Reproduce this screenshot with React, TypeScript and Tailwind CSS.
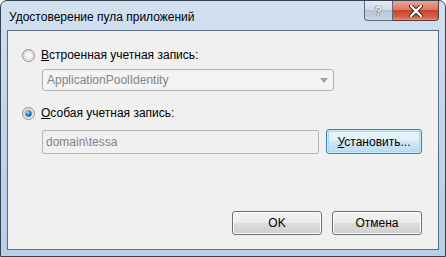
import React from 'react';

const font = { fontFamily: '"Liberation Sans", "Noto Sans", sans-serif' };

function Radio ({ checked }: { checked?: boolean }) {
	return (
		<svg width="13" height="13" viewBox="0 0 13 13" className="shrink-0">
			<defs>
				<linearGradient id="rb" x1="0" y1="0" x2="1" y2="1">
					<stop offset="0" stopColor="#d3d3d3" />
					<stop offset="1" stopColor="#fdfdfd" />
				</linearGradient>
				<radialGradient id="rdot" cx="0.4" cy="0.35" r="0.7">
					<stop offset="0" stopColor="#bfe4fb" />
					<stop offset="0.45" stopColor="#3d8ed6" />
					<stop offset="1" stopColor="#0d3f7a" />
				</radialGradient>
			</defs>
			<circle cx="6.5" cy="6.5" r="6" fill="url(#rb)" stroke="#8e8f8f" />
			<circle cx="6.5" cy="6.5" r="4.3" fill="#f4f4f4" stroke="#cfcfcf" strokeWidth="0.8" />
			{checked && <circle cx="6.5" cy="6.5" r="3.2" fill="url(#rdot)" />}
		</svg>
	);
}

function Button ({ children, focused, className }: { children: React.ReactNode; focused?: boolean; className?: string }) {
	return (
		<div className={`flex items-center justify-center rounded-[3px] border text-[12px] text-black ${focused
			? 'border-[#3c7fb1] bg-[linear-gradient(#eaf6fd_0%,#e3f1fb_45%,#cfe7f7_50%,#b9dcf3_100%)] shadow-[inset_0_0_0_1px_#c5ecfc,inset_0_0_0_2px_#a3dcf6]'
			: 'border-[#707070] bg-[linear-gradient(#f2f2f2_0%,#ebebeb_49%,#dddddd_50%,#cfcfcf_100%)] shadow-[inset_0_0_0_1px_#fcfcfc]'} ${className ?? ''}`}>
			{children}
		</div>
	);
}

export default function App () {
	return (
		<div style={font}
			className="flex h-[257px] w-[446px] flex-col rounded-t-[7px] border border-[#36424f] bg-[linear-gradient(180deg,#d3e1f0_0%,#c2d6eb_40%,#b7cfe9_100%)]">
			{/* Title bar */}
			<div className="flex h-[29px] shrink-0 items-start">
				<div className="pl-[8px] pt-[7px] text-[12px] text-black">Удостоверение пула приложений</div>
				<div className="ml-auto mr-[6px] flex">
					<div className="flex h-[20px] w-[29px] items-center justify-center rounded-bl-[4px] border border-t-0 border-[#5a6a7d] bg-[linear-gradient(#e3eaf3_0%,#d1dce9_45%,#b4c4d8_50%,#c9d6e5_100%)] text-[13px] font-bold text-white [text-shadow:0_0_1px_#1f2b38,0_0_1px_#1f2b38]">
						?
					</div>
					<div className="flex h-[20px] w-[46px] items-center justify-center rounded-br-[4px] border border-l-0 border-t-0 border-[#5a3a34] bg-[linear-gradient(#e8a493_0%,#d97a66_45%,#c7432a_50%,#d5644a_85%,#e88f71_100%)]">
						<svg width="14" height="12" viewBox="0 0 14 12">
							<path d="M2 1 L12 11 M12 1 L2 11" stroke="#3a1a14" strokeWidth="4.2" strokeLinecap="round" />
							<path d="M2 1 L12 11 M12 1 L2 11" stroke="#ffffff" strokeWidth="2.4" strokeLinecap="round" />
						</svg>
					</div>
				</div>
			</div>

			{/* Client area */}
			<div className="mx-[6px] mb-[6px] flex flex-1 flex-col border border-[#5d6c7e] bg-[#f0f0f0] pl-[14px] pr-[16px] text-[12px] text-black">
				<div className="mt-[16px] flex h-[16px] items-center gap-[6px]">
					<Radio />
					<span><span className="underline">В</span>строенная учетная запись:</span>
				</div>
				<div className="ml-[20px] mt-[6px] flex h-[22px] w-[292px] items-center rounded-[3px] border border-[#b3b3b3] bg-[#f4f4f4] pl-[4px] pr-[5px] text-[#838383]">
					<span>ApplicationPoolIdentity</span>
					<svg width="8" height="5"
						viewBox="0 0 8 5"
						className="ml-auto">
						<path d="M0 0 H8 L4 5 Z" fill="#a0a0a0" />
					</svg>
				</div>

				<div className="mt-[14px] flex h-[16px] items-center gap-[6px]">
					<Radio checked />
					<span><span className="underline">О</span>собая учетная запись:</span>
				</div>
				<div className="ml-[20px] mt-[8px] flex items-center gap-[7px]">
					<div className="flex h-[24px] w-[277px] items-center rounded-[2px] border border-[#b7b7b7] bg-[#f0f0f0] pl-[3px] text-[#838383]">
						domain\tessa
					</div>
					<Button focused
						className="h-[25px] w-[96px]">
						<span><span className="underline">У</span>становить...</span>
					</Button>
				</div>

				<div className="mb-[14px] mt-auto flex justify-end gap-[10px]">
					<Button className="h-[24px] w-[90px]">OK</Button>
					<Button className="h-[24px] w-[90px]">Отмена</Button>
				</div>
			</div>
		</div>
	);
}
